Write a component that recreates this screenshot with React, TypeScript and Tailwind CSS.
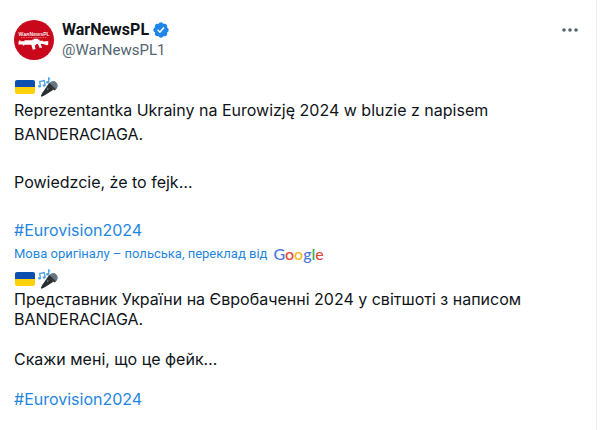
import type { ReactNode } from 'react'

function Avatar() {
  return (
    <svg viewBox="0 0 40 40" className="size-10" role="img" aria-label="WarNewsPL">
      <circle cx="20" cy="20" r="20" fill="#c9081b" />
      <text
        x="20"
        y="15.5"
        textAnchor="middle"
        fill="#fbe3e5"
        fontSize="5"
        fontWeight="700"
        fontFamily="'Liberation Sans', sans-serif"
      >
        W<tspan fontSize="4.4">AR</tspan>N<tspan fontSize="4.4">EWS</tspan>PL
      </text>
      <path d="M7 17.500h26" stroke="#e27880" strokeWidth="0.8" strokeDasharray="1.400 1" />
      {/* rifle */}
      <path
        fill="#fff"
        d="M4.500 21.200h1V20h.8v1.200h4.200v-.9h8v-.8h1.300v-.8h4.400v1h1.400v1.100h3.400v.6l5.200-.5v3.900l-1.600.4-3.200-1.300h-2.800l1.500 3.900h-2.600l-1.600-3.700h-1.600l-.5 1.200h-1.200l1 3.600-2.800.8-1.500-5H10.200v.8H8.800v-.9H4.500z"
      />
    </svg>
  )
}

function VerifiedBadge() {
  return (
    <svg viewBox="0 0 22 22" className="size-[18px]" role="img" aria-label="Verified account">
      <path
        fill="#1d86e8"
        d="M20.396 11c-.018-.646-.215-1.275-.57-1.816-.354-.54-.852-.972-1.438-1.246.223-.607.27-1.264.14-1.897-.131-.634-.437-1.218-.882-1.687-.47-.445-1.053-.75-1.687-.882-.633-.13-1.29-.083-1.897.14-.273-.587-.704-1.086-1.245-1.44S11.647 1.620 11 1.604c-.646.017-1.273.213-1.813.568s-.969.854-1.240 1.440c-.608-.223-1.267-.272-1.902-.140-.635.130-1.220.436-1.690.882-.445.470-.749 1.055-.878 1.688-.130.633-.080 1.290.144 1.896-.587.274-1.087.705-1.443 1.245-.356.540-.555 1.170-.574 1.817.020.647.218 1.276.574 1.817.356.540.856.972 1.443 1.245-.224.606-.274 1.263-.144 1.896.130.634.433 1.218.877 1.688.470.443 1.054.747 1.687.878.633.132 1.290.084 1.897-.136.274.586.705 1.084 1.246 1.439.540.354 1.170.551 1.816.569.647-.016 1.276-.213 1.817-.567s.972-.854 1.245-1.440c.604.239 1.266.296 1.903.164.636-.132 1.220-.447 1.680-.907.460-.460.776-1.044.908-1.681s.075-1.299-.165-1.903c.586-.274 1.084-.705 1.439-1.246.354-.540.551-1.170.569-1.816z"
      />
      <path
        fill="#fff"
        d="M9.662 14.850l-3.429-3.428 1.293-1.302 2.072 2.072 4.400-4.794 1.347 1.246z"
      />
    </svg>
  )
}

function FlagAndMic() {
  return (
    <span className="flex items-center gap-[3px]">
      <svg viewBox="0 0 20 14" className="ml-px h-[14px] w-5" role="img" aria-label="🇺🇦">
        <path fill="#0d4fae" d="M0 7V2a2 2 0 0 1 2-2h16a2 2 0 0 1 2 2v5z" />
        <path fill="#fdd10d" d="M0 7h20v5a2 2 0 0 1-2 2H2a2 2 0 0 1-2-2z" />
      </svg>
      <svg viewBox="0 0 20 20" className="size-5" role="img" aria-label="🎤">
        <g fill="none" stroke="#4aa3e8" strokeWidth="1.300">
          <path d="M2.400 9.200 1.700 4.600 6.200 3.600l1 4.700" />
          <path d="M10.700 5.200V1l1.200 1.200" />
        </g>
        <g fill="#4aa3e8">
          <ellipse cx="1.500" cy="9.300" rx="1.500" ry="1.200" />
          <ellipse cx="6.200" cy="8.500" rx="1.500" ry="1.200" />
          <ellipse cx="9.600" cy="5.300" rx="1.500" ry="1.200" />
        </g>
        <path fill="#292f33" d="m10.400 7 5.400 5.400-9.400 6.200-2.900 1.100-.7-.7 1.300-2.700z" />
        <path fill="#66757f" d="M11 6.600a4.600 4.600 0 1 1 6.200 6.200z" />
        <path fill="#292f33" d="m10 7.200 1.400-1.300 6.400 6.300-1.200 1.400z" />
        <path fill="#8899a6" d="m8.900 12.100 1-1 .8.800-1 1z" />
      </svg>
    </span>
  )
}

function GoogleLogo() {
  return (
    <span className="font-['Lato',sans-serif] text-base leading-5 font-medium">
      <span className="text-[#4a78dc]">G</span>
      <span className="text-[#e0483c]">o</span>
      <span className="text-[#f5b921]">o</span>
      <span className="text-[#4a78dc]">g</span>
      <span className="text-[#3fa757]">l</span>
      <span className="text-[#e0483c]">e</span>
    </span>
  )
}

function Hashtag({ children }: { children: ReactNode }) {
  return (
    <a href="#Eurovision2024" className="text-[#1f86de]">
      {children}
    </a>
  )
}

export default function App() {
  return (
    <div className="min-h-screen bg-white pr-3 font-['Inter',sans-serif] text-[#0f1419]">
      <article className="min-h-screen border-r border-[#eaeff1] px-[14px] pt-5">
        <header className="flex items-start gap-2">
          <Avatar />
          <div className="flex-1 font-['Roboto',sans-serif] leading-5">
            <div className="flex items-center gap-[3px]">
              <a href="#profile" className="text-base leading-5 font-bold">WarNewsPL</a>
              <VerifiedBadge />
            </div>
            <a href="#profile" className="block text-[15px] text-[#536471]">@WarNewsPL1</a>
          </div>
          <button type="button" aria-label="More" className="mr-1 flex h-5 items-center">
            <svg viewBox="0 0 16 4" className="h-1 w-4" fill="#536471">
              <circle cx="2" cy="2" r="1.800" />
              <circle cx="8" cy="2" r="1.800" />
              <circle cx="14" cy="2" r="1.800" />
            </svg>
          </button>
        </header>

        <div className="mt-4 text-base leading-6">
          <div className="flex h-[22px] items-center">
            <FlagAndMic />
          </div>
          <p>
            Reprezentantka Ukrainy na Eurowizję 2024 w bluzie z napisem
            <br />
            BANDERACIAGA.
          </p>
          <p className="mt-6">Powiedzcie, że to fejk…</p>
          <p className="mt-6">
            <Hashtag>#Eurovision2024</Hashtag>
          </p>
        </div>

        <div className="flex h-6 items-center gap-1.5 text-[13px] text-[#1f86de]">
          <a href="#translation" className="font-['Roboto',sans-serif]">
            Мова оригіналу – польська, переклад від
          </a>
          <GoogleLogo />
        </div>

        <div className="mt-[3px] text-base leading-5">
          <div className="flex h-5 items-center">
            <FlagAndMic />
          </div>
          <p>
            Представник України на Євробаченні 2024 у світшоті з написом
            <br />
            BANDERACIAGA.
          </p>
          <p className="mt-5">Скажи мені, що це фейк…</p>
          <p className="mt-5">
            <Hashtag>#Eurovision2024</Hashtag>
          </p>
        </div>
      </article>
    </div>
  )
}
